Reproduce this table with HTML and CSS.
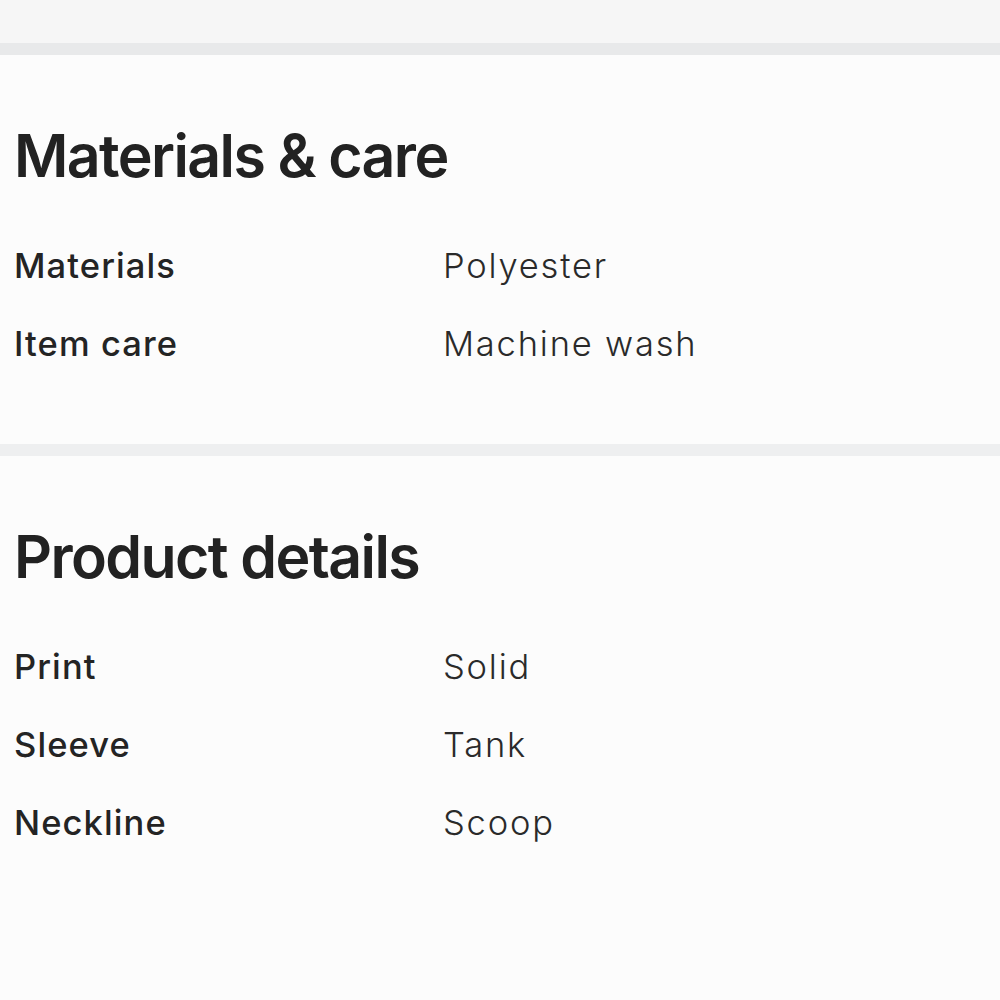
FILE: index.html
```html
<!DOCTYPE html>
<html>
<head>
<meta charset="utf-8">
<link rel="stylesheet" href="styles.css">
</head>
<body>
<div class="top"></div>
<div class="divider"></div>
<section class="section">
  <h2 class="title">Materials &amp; care</h2>
  <div class="rows">
    <div class="row"><span class="label">Materials</span><span class="value">Polyester</span></div>
    <div class="row"><span class="label">Item care</span><span class="value">Machine wash</span></div>
  </div>
</section>
<div class="divider light"></div>
<section class="section second">
  <h2 class="title">Product details</h2>
  <div class="rows">
    <div class="row"><span class="label">Print</span><span class="value">Solid</span></div>
    <div class="row"><span class="label">Sleeve</span><span class="value">Tank</span></div>
    <div class="row"><span class="label">Neckline</span><span class="value">Scoop</span></div>
  </div>
</section>
</body>
</html>
```
FILE: styles.css
```css
html, body {
  margin: 0;
  padding: 0;
  background: #fcfcfc;
  font-family: Inter, "Noto Sans", sans-serif;
  color: #222222;
}
.top {
  height: 43px;
  background: #f6f6f6;
}
.divider {
  height: 12px;
  background: #e8e9ea;
}
.divider.light {
  background: #eeeff0;
}
.section {
  padding: 66px 14px 0;
  height: 389px;
  box-sizing: border-box;
}
.section.second {
  height: auto;
}
.title {
  margin: 0;
  font-size: 59px;
  line-height: 70px;
  font-weight: 600;
  letter-spacing: -1.6px;
}
.rows {
  margin-top: 35px;
  display: flex;
  flex-direction: column;
}
.row {
  display: grid;
  grid-template-columns: 429px 1fr;
  height: 78px;
  align-items: center;
}
.label {
  font-size: 34.5px;
  font-weight: 500;
  letter-spacing: 1.1px;
  color: #242424;
}
.value {
  font-size: 34.5px;
  font-weight: 300;
  letter-spacing: 1.8px;
  color: #2a2a2a;
}
```
